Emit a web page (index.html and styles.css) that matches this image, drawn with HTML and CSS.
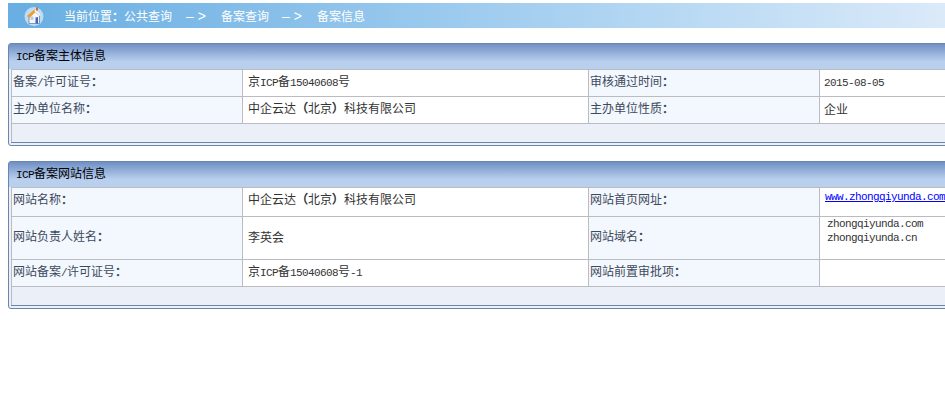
FILE: index.html
```html
<!DOCTYPE html>
<html lang="zh-CN">

<head>
    <meta charset="UTF-8">
    <title>备案信息</title>
    <link rel="stylesheet" href="styles.css">
</head>

<body>
    <div class="crumbs">
        <svg class="home" width="20" height="20" viewBox="0 0 20 20">
            <circle cx="10" cy="10.5" r="9.5" fill="#dce9f6" opacity="0.75"/>
            <path d="M5 10 L5 17.5 L15.5 17.5 L15.5 9.5 L10.5 5 Z" fill="#f4f7fc" stroke="#6c7fa8" stroke-width="0.8"/>
            <path d="M11.5 17.5 L11.5 11.5 L14 11 L14 17.5 Z" fill="#3f67b5"/>
            <path d="M6.5 10.5 L9.5 10.5 L9.5 14 L6.5 14 Z" fill="#b9cdee"/>
            <path d="M3 10 L11 3 L12.5 5 L5.5 12 Z" fill="#f59a2c"/>
            <path d="M11 3 L16.5 8.5 L15.8 10 L10.5 5.2 Z" fill="#f8f4ea"/>
            <rect x="12.2" y="1.5" width="1.6" height="3" fill="#b5562a"/>
        </svg>
        <span class="crumb-here">当前位置<span class="mark">：</span>公共查询</span>
        <span class="crumb-arrow">– &gt;</span>
        <span>备案查询</span>
        <span class="crumb-arrow">– &gt;</span>
        <span>备案信息</span>
    </div>

    <div class="panel">
        <div class="panel-title"><span class="lat">ICP</span>备案主体信息</div>
        <table class="info">
            <tr>
                <th>备案<span class="lat">/</span>许可证号<span class="mark">：</span></th>
                <td class="val">京<span class="lat">ICP</span>备<span class="lat">15040608</span>号</td>
                <th>审核通过时间<span class="mark">：</span></th>
                <td class="val2"><span class="lat">2015-08-05</span></td>
            </tr>
            <tr>
                <th>主办单位名称<span class="mark">：</span></th>
                <td class="val">中企云达<span class="mark">（</span>北京<span class="mark">）</span>科技有限公司</td>
                <th>主办单位性质<span class="mark">：</span></th>
                <td class="val2">企业</td>
            </tr>
            <tr class="foot">
                <td colspan="4"></td>
            </tr>
        </table>
    </div>

    <div class="panel">
        <div class="panel-title"><span class="lat">ICP</span>备案网站信息</div>
        <table class="info">
            <tr class="tall1">
                <th>网站名称<span class="mark">：</span></th>
                <td class="val">中企云达<span class="mark">（</span>北京<span class="mark">）</span>科技有限公司</td>
                <th>网站首页网址<span class="mark">：</span></th>
                <td class="val2 top link"><a href="#" class="lat">www.zhongqiyunda.com</a></td>
            </tr>
            <tr class="tall2">
                <th>网站负责人姓名<span class="mark">：</span></th>
                <td class="val">李英会</td>
                <th>网站域名<span class="mark">：</span></th>
                <td class="val2 top domains"><span class="lat">zhongqiyunda.com</span><span class="lat">zhongqiyunda.cn</span></td>
            </tr>
            <tr>
                <th>网站备案<span class="lat">/</span>许可证号<span class="mark">：</span></th>
                <td class="val">京<span class="lat">ICP</span>备<span class="lat">15040608</span>号<span class="lat">-1</span></td>
                <th>网站前置审批项<span class="mark">：</span></th>
                <td class="val2"></td>
            </tr>
            <tr class="foot">
                <td colspan="4"></td>
            </tr>
        </table>
    </div>
</body>

</html>
```

FILE: styles.css
```css
html {
    overflow: hidden;
}

body {
    margin: 0;
    padding: 3px 0 0 8px;
    width: 1100px;
    background: #fff;
    font-family: "Noto Sans CJK SC", "Liberation Sans", sans-serif;
    font-size: 12px;
    color: #333;
}

/* latin text is 6px wide per char in the original */
.lat {
    font-family: "Liberation Mono", monospace;
    font-size: 11px;
    letter-spacing: -0.6px;
}

/* full width marks sit centred in their cell */
.mark {
    display: inline-block;
    width: 12px;
    text-align: center;
    font-family: "Liberation Sans", sans-serif;
    font-weight: bold;
}

/* Breadcrumb bar */
.crumbs {
    display: flex;
    align-items: center;
    width: 1000px;
    height: 25px;
    padding-left: 16px;
    box-sizing: border-box;
    background: linear-gradient(90deg, #68aee2 0%, #a5cff0 52%, #e2eefa 100%);
    color: #fff;
}

.home {
    flex: none;
    margin-right: 20px;
}

.crumb-here {
    margin-right: 1px;
}

.crumb-arrow {
    width: 20px;
    margin: 0 15px 0 13px;
    font-family: "Liberation Sans", sans-serif;
    font-size: 14px;
}

/* Panels */
.panel {
    width: 1000px;
    margin-top: 15px;
    padding: 0 2px 2px;
    box-sizing: border-box;
    border: 1px solid #6a86ae;
    border-radius: 3px 0 0 3px;
    background: #ebf0f8;
}

.panel-title {
    height: 25px;
    margin: 0 -2px;
    padding-left: 7px;
    line-height: 21px;
    color: #000;
    background: linear-gradient(180deg, #6f90c4 0%, #b9cfee 70%, #b9cfee 100%);
}

.info {
    width: 100%;
    table-layout: fixed;
    border-collapse: collapse;
    border: 1px solid #6a86ae;
}

.info tr {
    height: 27px;
}

.info th,
.info td {
    border: 1px solid #bbbcc2;
    padding: 0 1px 3px;
    font-weight: normal;
    text-align: left;
    vertical-align: middle;
    line-height: 14px;
}

.info th {
    width: 228px;
    background: #f3f7fe;
    color: #3d4a5c;
}

.info td.val {
    width: 339px;
    padding-left: 5px;
    background: #fff;
}

.info td.val2 {
    padding-left: 4px;
    background: #fff;
}

.info td.top {
    vertical-align: top;
}

.info td.link {
    padding-left: 5px;
}

.info a {
    color: #00f;
}

.info .tall1 {
    height: 29px;
}

.info .tall1 th,
.info .tall1 .val {
    padding-bottom: 5px;
}

.info .tall2 {
    height: 43px;
}

.info td.domains {
    padding-left: 7px;
}

.info .domains .lat {
    display: block;
}

.info .foot {
    height: 19px;
}

.info .foot td {
    background: #ebf0f8;
    border-bottom-color: #6a86ae;
}
```
